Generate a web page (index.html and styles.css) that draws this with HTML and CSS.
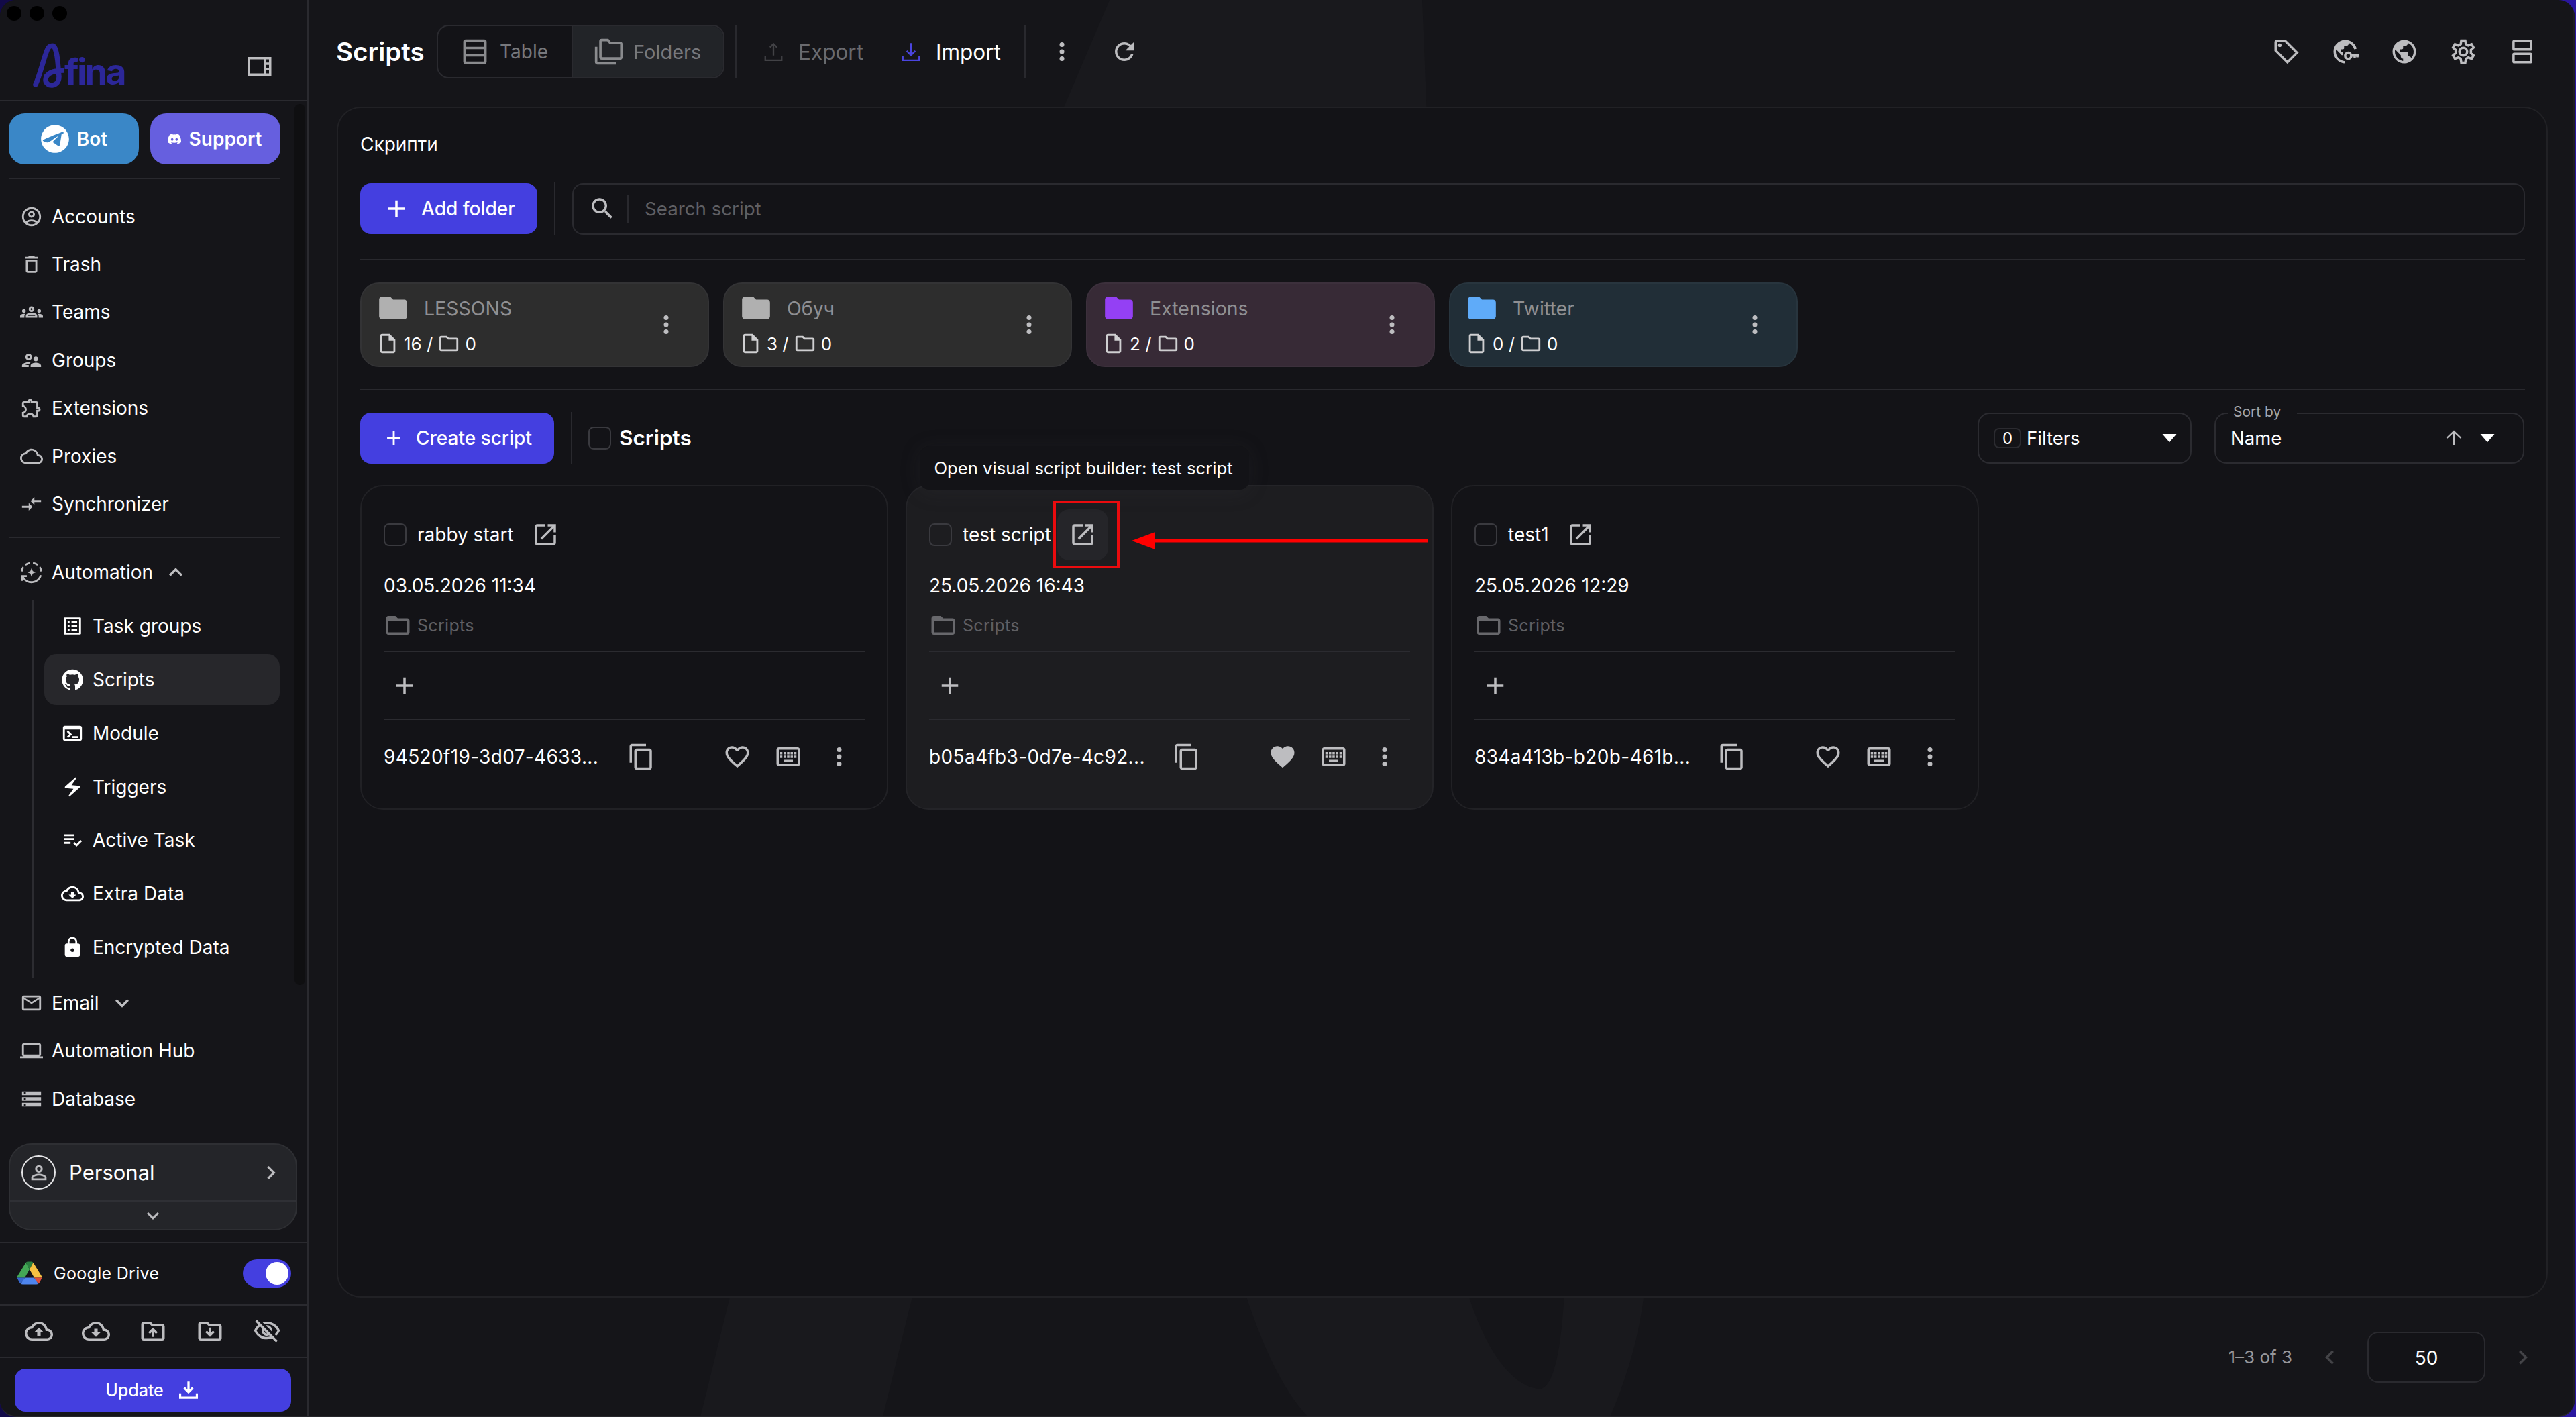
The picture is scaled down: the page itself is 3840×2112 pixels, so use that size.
FILE: index.html
```html
<!DOCTYPE html>
<html lang="en">
<head>
    <meta charset="UTF-8">
    <meta name="viewport" content="width=device-width, initial-scale=1.0">
    <title>Afina - Scripts</title>
    <link rel="stylesheet" href="styles.css">
</head>
<body>
    <!-- Icon sprite -->
    <svg class="sprite" xmlns="http://www.w3.org/2000/svg">
        <symbol id="i-panel" viewBox="0 0 24 24"><path d="M2 4v16h20V4H2zm18 4.67h-2.5V6H20v2.67zm-2.5 2H20v2.67h-2.5v-2.67zM4 6h11.5v12H4V6zm13.5 12v-2.67H20V18h-2.5z"/></symbol>
        <symbol id="i-telegram" viewBox="0 0 24 24"><path d="M12 2C6.48 2 2 6.48 2 12s4.48 10 10 10 10-4.48 10-10S17.52 2 12 2zm4.64 6.8c-.15 1.58-.8 5.42-1.13 7.19-.14.75-.42 1-.68 1.03-.58.05-1.02-.38-1.58-.75-.88-.58-1.38-.94-2.23-1.5-.99-.65-.35-1.01.22-1.59.15-.15 2.71-2.48 2.76-2.69.01-.03.01-.14-.07-.2-.08-.06-.19-.04-.27-.02-.12.02-1.96 1.25-5.54 3.69-.52.36-1 .53-1.42.52-.47-.01-1.37-.26-2.03-.48-.82-.27-1.47-.42-1.42-.88.03-.24.37-.49 1.02-.75 4-1.74 6.68-2.88 8.03-3.44 3.82-1.59 4.62-1.87 5.14-1.87.11 0 .37.03.54.17.14.12.18.28.2.45-.02.07-.02.13-.03.27z"/></symbol>
        <symbol id="i-discord" viewBox="0 0 24 24"><path d="M20.317 4.37a19.791 19.791 0 0 0-4.885-1.515.074.074 0 0 0-.079.037c-.21.375-.444.864-.608 1.25a18.27 18.27 0 0 0-5.487 0 12.64 12.64 0 0 0-.617-1.25.077.077 0 0 0-.079-.037A19.736 19.736 0 0 0 3.677 4.37a.07.07 0 0 0-.032.027C.533 9.046-.32 13.58.099 18.057a.082.082 0 0 0 .031.057 19.9 19.9 0 0 0 5.993 3.03.078.078 0 0 0 .084-.028 14.09 14.09 0 0 0 1.226-1.994.076.076 0 0 0-.041-.106 13.107 13.107 0 0 1-1.872-.892.077.077 0 0 1-.008-.128 10.2 10.2 0 0 0 .372-.292.074.074 0 0 1 .077-.01c3.928 1.793 8.18 1.793 12.062 0a.074.074 0 0 1 .078.01c.12.098.246.198.373.292a.077.077 0 0 1-.006.127 12.299 12.299 0 0 1-1.873.892.077.077 0 0 0-.041.107c.36.698.772 1.362 1.225 1.993a.076.076 0 0 0 .084.028 19.839 19.839 0 0 0 6.002-3.03.077.077 0 0 0 .032-.054c.5-5.177-.838-9.674-3.549-13.66a.061.061 0 0 0-.031-.03zM8.02 15.33c-1.183 0-2.157-1.085-2.157-2.419 0-1.333.956-2.419 2.157-2.419 1.21 0 2.176 1.096 2.157 2.42 0 1.333-.956 2.418-2.157 2.418zm7.975 0c-1.183 0-2.157-1.085-2.157-2.419 0-1.333.955-2.419 2.157-2.419 1.21 0 2.176 1.096 2.157 2.42 0 1.333-.946 2.418-2.157 2.418z"/></symbol>
        <symbol id="i-account" viewBox="0 0 24 24"><path d="M12 2C6.48 2 2 6.48 2 12s4.48 10 10 10 10-4.48 10-10S17.52 2 12 2zM7.35 18.5C8.66 17.56 10.26 17 12 17s3.34.56 4.65 1.5c-1.31.94-2.91 1.5-4.65 1.5s-3.34-.56-4.65-1.5zm10.79-1.38C16.45 15.8 14.32 15 12 15s-4.45.8-6.14 2.12C4.7 15.73 4 13.95 4 12c0-4.42 3.58-8 8-8s8 3.58 8 8c0 1.95-.7 3.73-1.86 5.12zM12 6c-1.93 0-3.5 1.57-3.5 3.5S10.07 13 12 13s3.5-1.57 3.5-3.5S13.93 6 12 6zm0 5c-.83 0-1.5-.67-1.5-1.5S11.17 8 12 8s1.5.67 1.5 1.5S12.83 11 12 11z"/></symbol>
        <symbol id="i-trash" viewBox="0 0 24 24"><path d="M6 19c0 1.1.9 2 2 2h8c1.1 0 2-.9 2-2V7H6v12zM8 9h8v10H8V9zm7.5-5l-1-1h-5l-1 1H5v2h14V4z"/></symbol>
        <symbol id="i-teams" viewBox="0 0 24 24"><path d="M4 13c1.1 0 2-.9 2-2s-.9-2-2-2-2 .9-2 2 .9 2 2 2zm1.13 1.1C4.76 14.04 4.39 14 4 14c-.99 0-1.93.21-2.78.58C.48 14.9 0 15.62 0 16.43V18h4.5v-1.61c0-.83.23-1.61.63-2.29zM20 13c1.1 0 2-.9 2-2s-.9-2-2-2-2 .9-2 2 .9 2 2 2zm4 3.43c0-.81-.48-1.53-1.22-1.85-.85-.37-1.79-.58-2.78-.58-.39 0-.76.04-1.13.1.4.68.63 1.46.63 2.29V18H24v-1.57zM16.24 13.65c-1.17-.52-2.61-.9-4.24-.9s-3.07.39-4.24.9C6.68 14.13 6 15.21 6 16.39V18h12v-1.61c0-1.18-.68-2.26-1.76-2.74zM8.07 16c.09-.23.13-.39.91-.69.97-.38 1.99-.56 3.02-.56s2.05.18 3.02.56c.77.3.81.46.91.69H8.07zM12 8c.55 0 1 .45 1 1s-.45 1-1 1-1-.45-1-1 .45-1 1-1m0-2c-1.66 0-3 1.34-3 3s1.34 3 3 3 3-1.34 3-3-1.34-3-3-3z"/></symbol>
        <symbol id="i-groups" viewBox="0 0 24 24"><path d="M9 12c1.93 0 3.5-1.57 3.5-3.5S10.93 5 9 5 5.5 6.57 5.5 8.5 7.07 12 9 12zm0-5c.83 0 1.5.67 1.5 1.5S9.83 10 9 10s-1.5-.67-1.5-1.5S8.17 7 9 7zm.05 10H4.77c.99-.5 2.7-1 4.23-1 .11 0 .23.01.34.01.34-.73.93-1.33 1.64-1.81-.73-.13-1.42-.2-1.98-.2-2.34 0-7 1.17-7 3.5V19h7v-1.5c0-.17.02-.34.05-.5zm7.45-2.5c-1.84 0-5.5 1.01-5.5 3V19h11v-1.5c0-1.99-3.66-3-5.5-3zm1.21-1.82c.76-.43 1.29-1.24 1.29-2.18C19 9.12 17.88 8 16.5 8S14 9.12 14 10.5c0 .94.53 1.75 1.29 2.18.36.2.77.32 1.21.32s.85-.12 1.21-.32z"/></symbol>
        <symbol id="i-extension" viewBox="0 0 24 24"><path d="M10.5 4.5c.28 0 .5.22.5.5v2h6v6h2c.28 0 .5.22.5.5s-.22.5-.5.5h-2v6h-2.12c-.68-1.75-2.39-3-4.38-3s-3.7 1.25-4.38 3H4v-2.12c1.75-.68 3-2.39 3-4.38 0-1.99-1.24-3.7-2.99-4.38L4 7h6V5c0-.28.22-.5.5-.5m0-2C9.12 2.5 8 3.62 8 5H4c-1.1 0-1.99.9-1.99 2v3.8h.29c1.49 0 2.7 1.21 2.7 2.7s-1.21 2.7-2.7 2.7H2V20c0 1.1.9 2 2 2h3.8v-.3c0-1.49 1.21-2.7 2.7-2.7s2.7 1.21 2.7 2.7v.3H17c1.1 0 2-.9 2-2v-4c1.38 0 2.5-1.12 2.5-2.5S20.38 11 19 11V7c0-1.1-.9-2-2-2h-4c0-1.38-1.12-2.5-2.5-2.5z"/></symbol>
        <symbol id="i-cloud" viewBox="0 0 24 24"><path d="M19.35 10.04C18.67 6.59 15.64 4 12 4 9.11 4 6.6 5.64 5.35 8.04 2.34 8.36 0 10.91 0 14c0 3.31 2.69 6 6 6h13c2.76 0 5-2.24 5-5 0-2.64-2.05-4.78-4.65-4.96zM19 18H6c-2.21 0-4-1.79-4-4 0-2.05 1.53-3.76 3.56-3.97l1.07-.11.5-.95C8.08 7.14 9.94 6 12 6c2.62 0 4.88 1.86 5.39 4.43l.3 1.5 1.53.11c1.56.1 2.78 1.41 2.78 2.96 0 1.65-1.35 3-3 3z"/></symbol>
        <symbol id="i-cloud-down" viewBox="0 0 24 24"><use href="#i-cloud"/><path d="M13.45 10h-2.9v3H8l4 4 4-4h-2.55z"/></symbol>
        <symbol id="i-cloud-up" viewBox="0 0 24 24"><use href="#i-cloud"/><path d="M8 13h2.55v3h2.9v-3H16l-4-4z"/></symbol>
        <symbol id="i-sync" viewBox="0 0 24 24"><path d="M9.01 14H2v2h7.01v3L13 15l-3.99-4v3zm5.98-1v-3H22V8h-7.01V5L11 9l3.99 4z"/></symbol>
        <symbol id="i-auto" viewBox="0 0 24 24"><path d="M12 7.5l1.3 3.2 3.2 1.3-3.2 1.3-1.3 3.2-1.3-3.2-3.2-1.3 3.2-1.3z"/><path class="line" d="M1.8 11a10 10 0 0 1 1.500-4.500M5.500 4.200A10 10 0 0 1 10.500 2M13.500 2a10 10 0 0 1 5 2.200M20.700 6.500a10 10 0 0 1 1.500 4.500M21.800 15A10.200 10.200 0 0 1 3 17M2 21v-5h5"/></symbol>
        <symbol id="i-up" viewBox="0 0 24 24"><path d="M12 8l-6 6 1.41 1.41L12 10.83l4.59 4.58L18 14z"/></symbol>
        <symbol id="i-down" viewBox="0 0 24 24"><path d="M16.59 8.59L12 13.17 7.41 8.59 6 10l6 6 6-6z"/></symbol>
        <symbol id="i-right" viewBox="0 0 24 24"><path d="M10 6L8.59 7.41 13.17 12l-4.58 4.59L10 18l6-6z"/></symbol>
        <symbol id="i-left" viewBox="0 0 24 24"><path d="M15.41 7.41L14 6l-6 6 6 6 1.41-1.41L10.83 12z"/></symbol>
        <symbol id="i-list" viewBox="0 0 24 24"><path d="M19 5v14H5V5h14m1.1-2H3.9c-.5 0-.9.4-.9.9v16.2c0 .4.4.9.9.9h16.2c.4 0 .9-.5.9-.9V3.9c0-.5-.5-.9-.9-.9zM11 7h6v2h-6V7zm0 4h6v2h-6v-2zm0 4h6v2h-6zM7 7h2v2H7zm0 4h2v2H7zm0 4h2v2H7z"/></symbol>
        <symbol id="i-github" viewBox="0 0 24 24"><path d="M12 1.27a11 11 0 00-3.48 21.46c.55.09.73-.28.73-.55v-1.84c-3.03.64-3.67-1.46-3.67-1.46-.55-1.29-1.28-1.65-1.28-1.65-.92-.65.1-.65.1-.65 1.1 0 1.73 1.1 1.73 1.1.92 1.65 2.57 1.2 3.21.92a2 2 0 01.64-1.47c-2.47-.27-5.04-1.19-5.04-5.5 0-1.1.46-2.1 1.2-2.84a3.76 3.76 0 010-2.93s.91-.28 3.11 1.1c1.8-.49 3.7-.49 5.5 0 2.1-1.38 3.02-1.1 3.02-1.1a3.76 3.76 0 01.1 2.93c.83.74 1.2 1.74 1.2 2.94 0 4.21-2.57 5.13-5.04 5.4.45.37.82.92.82 2.02v3.03c0 .27.1.64.73.55A11 11 0 0012 1.27"/></symbol>
        <symbol id="i-terminal" viewBox="0 0 24 24"><path d="M20 4H4c-1.11 0-2 .9-2 2v12c0 1.1.89 2 2 2h16c1.1 0 2-.9 2-2V6c0-1.1-.89-2-2-2zm0 14H4V8h16v10zm-2-1h-6v-2h6v2zM7.5 17l-1.41-1.41L8.67 13l-2.59-2.59L7.5 9l4 4-4 4z"/></symbol>
        <symbol id="i-bolt" viewBox="0 0 24 24"><path d="M14.69 2.21L4.33 11.49c-.64.58-.28 1.65.58 1.73L13 14l-4.85 6.76c-.22.31-.19.74.08 1.01.3.3.77.31 1.08.02l10.36-9.28c.64-.58.28-1.65-.58-1.73L11 10l4.85-6.76c.22-.31.19-.74-.08-1.01-.3-.3-.77-.31-1.08-.02z"/></symbol>
        <symbol id="i-tasks" viewBox="0 0 24 24"><path d="M3 10h11v2H3zm0-4h11v2H3zm0 8h7v2H3zm17.59-2.07l-4.25 4.24-2.12-2.12-1.41 1.41L16.34 19 22 13.34z"/></symbol>
        <symbol id="i-lock" viewBox="0 0 24 24"><path d="M18 8h-1V6c0-2.76-2.24-5-5-5S7 3.24 7 6v2H6c-1.1 0-2 .9-2 2v10c0 1.1.9 2 2 2h12c1.1 0 2-.9 2-2V10c0-1.1-.9-2-2-2zm-6 9c-1.1 0-2-.9-2-2s.9-2 2-2 2 .9 2 2-.9 2-2 2zm3.1-9H8.9V6c0-1.71 1.39-3.1 3.1-3.1 1.71 0 3.1 1.39 3.1 3.1v2z"/></symbol>
        <symbol id="i-mail" viewBox="0 0 24 24"><path d="M22 6c0-1.1-.9-2-2-2H4c-1.1 0-2 .9-2 2v12c0 1.1.9 2 2 2h16c1.1 0 2-.9 2-2V6zm-2 0l-8 5-8-5h16zm0 12H4V8l8 5 8-5v10z"/></symbol>
        <symbol id="i-laptop" viewBox="0 0 24 24"><path d="M20 18c1.1 0 1.99-.9 1.99-2L22 6c0-1.1-.9-2-2-2H4c-1.1 0-2 .9-2 2v10c0 1.1.9 2 2 2H0v2h24v-2h-4zM4 6h16v10H4V6z"/></symbol>
        <symbol id="i-storage" viewBox="0 0 24 24"><path d="M2 20h20v-4H2v4zm2-3h2v2H4v-2zM2 4v4h20V4H2zm4 3H4V5h2v2zm-4 7h20v-4H2v4zm2-3h2v2H4v-2z"/></symbol>
        <symbol id="i-person" viewBox="0 0 24 24"><path d="M12 6c1.1 0 2 .9 2 2s-.9 2-2 2-2-.9-2-2 .9-2 2-2m0 9c2.7 0 5.8 1.29 6 2v1H6v-.99c.2-.72 3.3-2.01 6-2.01m0-11C9.79 4 8 5.79 8 8s1.79 4 4 4 4-1.79 4-4-1.79-4-4-4zm0 9c-2.67 0-8 1.34-8 4v3h16v-3c0-2.66-5.33-4-8-4z"/></symbol>
        <symbol id="i-drive" viewBox="0 0 38 34"><path fill="#43a755" d="M13.500 1.500L.8 22Q0 23 .3 24H12l7-12.500z"/><path fill="#2b8040" d="M13.500 1.500Q14.500 0 16 0h6q1.500 0 2.500 1.500L19 11.500z"/><path fill="#f6c142" d="M24.500 1.500L37.200 22q.8 1 .5 2H26L19 11.500z"/><path fill="#4e85ee" d="M12 24h14l6 9q-1 1-3 1H9q-2 0-3-1z"/><path fill="#3566cc" d="M.3 24H12L6 33q-1-.5-2-2z"/><path fill="#dd4d3b" d="M26 24h11.700L34 31q-1 1.500-2 2z"/></symbol>
        <symbol id="i-folder-up" viewBox="0 0 24 24"><path d="M20 6h-8l-2-2H4c-1.1 0-1.99.9-1.99 2L2 18c0 1.1.9 2 2 2h16c1.1 0 2-.9 2-2V8c0-1.1-.9-2-2-2zm0 12H4V6h5.17l1.41 1.41.59.59H20v10zM9.41 14.42L11 12.84V17h2v-4.16l1.59 1.59L16 13.01 12.01 9 8 13.01l1.41 1.41z"/></symbol>
        <symbol id="i-folder-down" viewBox="0 0 24 24"><path d="M20 6h-8l-2-2H4c-1.1 0-1.99.9-1.99 2L2 18c0 1.1.9 2 2 2h16c1.1 0 2-.9 2-2V8c0-1.1-.9-2-2-2zm0 12H4V6h5.17l1.41 1.41.59.59H20v10zM9.41 11.58L11 13.16V9h2v4.16l1.59-1.59L16 12.99 12.01 17 8 12.99z"/></symbol>
        <symbol id="i-eye-off" viewBox="0 0 24 24"><path d="M12 6c3.79 0 7.17 2.13 8.82 5.5-.59 1.22-1.42 2.27-2.41 3.12l1.41 1.41c1.39-1.23 2.49-2.77 3.18-4.53C21.27 7.11 17 4 12 4c-1.27 0-2.49.2-3.64.57l1.65 1.65C10.66 6.09 11.32 6 12 6zm-1.07 1.14L13 9.21c.57.25 1.03.71 1.28 1.28l2.07 2.07c.08-.34.14-.7.14-1.07C16.5 9.01 14.48 7 12 7c-.37 0-.72.05-1.07.14zM2.01 3.87l2.68 2.68C3.06 7.83 1.77 9.53 1 11.5 2.73 15.89 7 19 12 19c1.52 0 2.98-.29 4.32-.82l3.42 3.42 1.41-1.41L3.42 2.45 2.01 3.87zm7.5 7.5l2.61 2.61c-.04.01-.08.02-.12.02-1.38 0-2.5-1.12-2.5-2.5 0-.05.01-.08.01-.13zm-3.4-3.4l1.75 1.75c-.23.55-.36 1.15-.36 1.78 0 2.48 2.02 4.5 4.5 4.5.63 0 1.23-.13 1.77-.36l.98.98c-.88.24-1.8.38-2.75.38-3.79 0-7.17-2.13-8.82-5.5.7-1.43 1.72-2.61 2.93-3.53z"/></symbol>
        <symbol id="i-download" viewBox="0 0 24 24"><path class="line thick" d="M12 1V14.500M6.500 9L12 14.500 17.500 9M1.300 16v5.500h21.400V16"/></symbol>
        <symbol id="i-export" viewBox="0 0 24 24"><path class="line" d="M12 17V2M7.500 6.500L12 2l4.500 4.500M1.500 18v5h21v-5"/></symbol>
        <symbol id="i-import" viewBox="0 0 24 24"><path class="line" d="M12 1v14.500M6.500 11l5.500 5.500 5.500-5.500M1.500 18v5h21v-5"/></symbol>
        <symbol id="i-table" viewBox="0 0 24 24"><path class="line" d="M4.500 3h15q1 0 1 1v16q0 1-1 1h-15q-1 0-1-1V4q0-1 1-1zM3.500 9h17M3.500 15h17"/></symbol>
        <symbol id="i-folders" viewBox="0 0 24 24"><path d="M3 8H1v12.500c0 1.100.9 2 2 2h15v-2H3V8z"/><path class="line" d="M6.500 2.500h5l2 2.500h8q1 0 1 1v10.500q0 1-1 1h-15q-1 0-1-1v-13q0-1 1-1z"/></symbol>
        <symbol id="i-dots" viewBox="0 0 24 24"><circle cx="12" cy="6" r="2"/><circle cx="12" cy="12" r="2"/><circle cx="12" cy="18" r="2"/></symbol>
        <symbol id="i-refresh" viewBox="0 0 24 24"><path d="M17.65 6.35C16.2 4.9 14.21 4 12 4c-4.42 0-7.99 3.58-7.99 8s3.57 8 7.99 8c3.73 0 6.84-2.55 7.73-6h-2.08c-.82 2.33-3.04 4-5.65 4-3.31 0-6-2.69-6-6s2.69-6 6-6c1.66 0 3.14.69 4.22 1.78L13 11h7V4l-2.35 2.35z"/></symbol>
        <symbol id="i-search" viewBox="0 0 24 24"><path d="M15.5 14h-.79l-.28-.27C15.41 12.59 16 11.11 16 9.5 16 5.91 13.09 3 9.5 3S3 5.91 3 9.5 5.91 16 9.5 16c1.61 0 3.09-.59 4.23-1.57l.27.28v.79l5 4.99L20.49 19l-4.99-5zm-6 0C7.01 14 5 11.99 5 9.5S7.01 5 9.5 5 14 7.01 14 9.5 11.99 14 9.5 14z"/></symbol>
        <symbol id="i-plus" viewBox="0 0 24 24"><path d="M19 13h-6v6h-2v-6H5v-2h6V5h2v6h6v2z"/></symbol>
        <symbol id="i-folder" viewBox="0 0 24 24"><path d="M10 4H4c-1.1 0-1.99.9-1.99 2L2 18c0 1.1.9 2 2 2h16c1.1 0 2-.9 2-2V8c0-1.1-.9-2-2-2h-8l-2-2z"/></symbol>
        <symbol id="i-folder-line" viewBox="0 0 24 24"><path d="M9.17 6l2 2H20v10H4V6h5.17M10 4H4c-1.1 0-1.99.9-1.99 2L2 18c0 1.1.9 2 2 2h16c1.1 0 2-.9 2-2V8c0-1.1-.9-2-2-2h-8l-2-2z"/></symbol>
        <symbol id="i-folder-tab" viewBox="0 0 24 24"><path d="M20 6h-8l-2-2H4c-1.1 0-1.99.9-1.99 2L2 18c0 1.1.9 2 2 2h16c1.1 0 2-.9 2-2V8c0-1.1-.9-2-2-2zm0 12H4V8h16v10z"/></symbol>
        <symbol id="i-doc" viewBox="0 0 24 24"><path d="M14 2H6c-1.1 0-1.99.9-1.99 2L4 20c0 1.1.89 2 1.99 2H18c1.1 0 2-.9 2-2V8l-6-6zM6 20V4h7v5h5v11H6z"/></symbol>
        <symbol id="i-open" viewBox="0 0 24 24"><path d="M19 19H5V5h7V3H5c-1.11 0-2 .9-2 2v14c0 1.1.89 2 2 2h14c1.1 0 2-.9 2-2v-7h-2v7zM14 3v2h3.59l-9.83 9.83 1.41 1.41L19 6.41V10h2V3h-7z"/></symbol>
        <symbol id="i-copy" viewBox="0 0 24 24"><path d="M16 1H4c-1.1 0-2 .9-2 2v14h2V3h12V1zm3 4H8c-1.1 0-2 .9-2 2v14c0 1.1.9 2 2 2h11c1.1 0 2-.9 2-2V7c0-1.1-.9-2-2-2zm0 16H8V7h11v14z"/></symbol>
        <symbol id="i-heart" viewBox="0 0 24 24"><path d="M16.5 3c-1.74 0-3.41.81-4.5 2.09C10.91 3.81 9.24 3 7.5 3 4.42 3 2 5.42 2 8.5c0 3.78 3.4 6.86 8.55 11.54L12 21.35l1.45-1.32C18.6 15.36 22 12.28 22 8.5 22 5.42 19.58 3 16.5 3zm-4.4 15.55l-.1.1-.1-.1C7.14 14.24 4 11.39 4 8.5 4 6.5 5.5 5 7.5 5c1.54 0 3.04.99 3.57 2.36h1.87C13.46 5.99 14.96 5 16.5 5c2 0 3.5 1.5 3.5 3.5 0 2.89-3.14 5.74-7.9 10.05z"/></symbol>
        <symbol id="i-heart-fill" viewBox="0 0 24 24"><path d="M12 21.35l-1.45-1.32C5.4 15.36 2 12.28 2 8.5 2 5.42 4.42 3 7.5 3c1.74 0 3.41.81 4.5 2.09C13.09 3.81 14.76 3 16.5 3 19.58 3 22 5.42 22 8.5c0 3.78-3.4 6.86-8.55 11.54L12 21.35z"/></symbol>
        <symbol id="i-keyboard" viewBox="0 0 24 24"><path d="M20 6v12H4V6h16m0-2H4c-1.1 0-1.99.9-1.99 2L2 18c0 1.1.9 2 2 2h16c1.1 0 2-.9 2-2V6c0-1.1-.9-2-2-2zm-9 4h2v2h-2zm0 3h2v2h-2zM8 8h2v2H8zm0 3h2v2H8zm-3 0h2v2H5zm0-3h2v2H5zm3 6.500h8v2H8zm6-3.500h2v2h-2zm0-3h2v2h-2zm3 3h2v2h-2zm0-3h2v2h-2z"/></symbol>
        <symbol id="i-label" viewBox="0 0 24 24"><path class="line" d="M4 3h7.300L21.200 12.800 13 21 3 11V4q0-1 1-1z"/><circle cx="6.500" cy="6.500" r="1.500"/></symbol>
        <symbol id="i-globe" viewBox="0 0 24 24"><path d="M12 2C6.48 2 2 6.48 2 12s4.48 10 10 10 10-4.48 10-10S17.52 2 12 2zm-1 17.93c-3.95-.49-7-3.85-7-7.93 0-.62.08-1.21.21-1.79L9 15v1c0 1.1.9 2 2 2v1.93zm6.9-2.54c-.26-.81-1-1.39-1.9-1.39h-1v-3c0-.55-.45-1-1-1H8v-2h2c.55 0 1-.45 1-1V7h2c1.1 0 2-.9 2-2v-.41c2.93 1.19 5 4.06 5 7.41 0 2.08-.8 3.97-2.1 5.39z"/></symbol>
        <symbol id="i-globe-key" viewBox="0 0 24 24"><path d="M12 22C6.480 22 2 17.520 2 12S6.480 2 12 2c4.200 0 7.800 2.600 9.300 6.200l.3 1.300-2 .5C18.900 7.600 17.200 5.500 15 4.590V5c0 1.100-.9 2-2 2h-2v2c0 .55-.45 1-1 1H8v2h2v3H9l-4.790-4.790C4.080 10.800 4 11.380 4 12c0 4.080 3.050 7.440 7 7.930l1 .07z"/><circle class="line" cx="14.500" cy="15.500" r="2.600"/><path class="line" d="M17 15.300h6.600M20 15v2.400M22.300 15v1.800"/></symbol>
        <symbol id="i-gear" viewBox="0 0 24 24"><path class="line" d="M10.300 2.600h3.400l.5 3 2 1.100 2.900-1.100 1.700 2.900-2.300 2v2.700l2.300 2-1.700 2.900-2.900-1.100-2 1.100-.5 3.300h-3.400l-.5-3.300-2-1.100-2.900 1.100-1.700-2.900 2.300-2v-2.700l-2.300-2 1.700-2.900 2.900 1.100 2-1.100z"/><circle class="line" cx="12" cy="12" r="3.300"/></symbol>
        <symbol id="i-rows" viewBox="0 0 24 24"><rect class="line" x="4.500" y="3" width="15" height="7.200" rx=".6"/><rect class="line" x="4.500" y="13.800" width="15" height="7.200" rx=".6"/></symbol>
        <symbol id="i-caret" viewBox="0 0 24 24"><path d="M6 8.500l6 7 6-7z"/></symbol>
        <symbol id="i-arrow-up" viewBox="0 0 24 24"><path class="line arrow" d="M12 21.500V3.500M3 12l9-8.500 9 8.500"/></symbol>
    </svg>

    <div class="window">
        <!-- Sidebar -->
        <aside class="sidebar">
            <div class="sidebar-top">
                <div class="traffic"><i></i><i></i><i></i></div>
                <div class="logo">
                    <svg class="logo-mark" viewBox="0 0 48 68"><path d="M5 62C13 44 17 22 23 9c3-6 9-6 11-1 5 12 4 26 6 42 0 17-20 16-20 5 0-10 12-14 27-14"/></svg>
                    <span>fina</span>
                </div>
                <svg class="icon s42"><use href="#i-panel"/></svg>
            </div>

            <div class="sidebar-body">
                <div class="promo">
                    <button class="btn-bot"><svg class="icon s50"><use href="#i-telegram"/></svg>Bot</button>
                    <button class="btn-support"><svg class="icon s20"><use href="#i-discord"/></svg>Support</button>
                </div>
                <hr class="side-line">
                <nav class="nav">
                    <a class="nav-item"><svg class="icon s34"><use href="#i-account"/></svg>Accounts</a>
                    <a class="nav-item"><svg class="icon s34"><use href="#i-trash"/></svg>Trash</a>
                    <a class="nav-item"><svg class="icon s34"><use href="#i-teams"/></svg>Teams</a>
                    <a class="nav-item"><svg class="icon s34"><use href="#i-groups"/></svg>Groups</a>
                    <a class="nav-item"><svg class="icon s34"><use href="#i-extension"/></svg>Extensions</a>
                    <a class="nav-item"><svg class="icon s34"><use href="#i-cloud"/></svg>Proxies</a>
                    <a class="nav-item"><svg class="icon s34"><use href="#i-sync"/></svg>Synchronizer</a>
                </nav>
                <hr class="side-line second">
                <nav class="nav automation">
                    <a class="nav-item"><svg class="icon s34"><use href="#i-auto"/></svg>Automation<svg class="icon s40"><use href="#i-up"/></svg></a>
                    <div class="subnav">
                        <a class="sub-item"><svg class="icon s34"><use href="#i-list"/></svg>Task groups</a>
                        <a class="sub-item active"><svg class="icon s34"><use href="#i-github"/></svg>Scripts</a>
                        <a class="sub-item"><svg class="icon s34"><use href="#i-terminal"/></svg>Module</a>
                        <a class="sub-item"><svg class="icon s34"><use href="#i-bolt"/></svg>Triggers</a>
                        <a class="sub-item"><svg class="icon s34"><use href="#i-tasks"/></svg>Active Task</a>
                        <a class="sub-item"><svg class="icon s34"><use href="#i-cloud-down"/></svg>Extra Data</a>
                        <a class="sub-item"><svg class="icon s34"><use href="#i-lock"/></svg>Encrypted Data</a>
                    </div>
                    <a class="nav-item"><svg class="icon s34"><use href="#i-mail"/></svg>Email<svg class="icon s40"><use href="#i-down"/></svg></a>
                    <a class="nav-item"><svg class="icon s34"><use href="#i-laptop"/></svg>Automation Hub</a>
                    <a class="nav-item"><svg class="icon s34"><use href="#i-storage"/></svg>Database</a>
                </nav>
                <div class="scroll-thumb"></div>
            </div>

            <div class="workspace">
                <div class="workspace-main">
                    <span class="avatar"><svg class="icon s34"><use href="#i-person"/></svg></span>
                    <span class="workspace-name">Personal</span>
                    <svg class="icon s40"><use href="#i-right"/></svg>
                </div>
                <div class="workspace-more"><svg class="icon s36"><use href="#i-down"/></svg></div>
            </div>

            <div class="drive">
                <svg class="drive-logo"><use href="#i-drive"/></svg>
                <span>Google Drive</span>
                <div class="toggle"></div>
            </div>

            <div class="sync-icons">
                <svg class="icon s42"><use href="#i-cloud-up"/></svg>
                <svg class="icon s42"><use href="#i-cloud-down"/></svg>
                <svg class="icon s42"><use href="#i-folder-up"/></svg>
                <svg class="icon s42"><use href="#i-folder-down"/></svg>
                <svg class="icon s42"><use href="#i-eye-off"/></svg>
            </div>

            <button class="btn-update">Update<svg class="icon s28"><use href="#i-download"/></svg></button>
        </aside>

        <!-- Main area -->
        <main class="main">
            <svg class="watermark" viewBox="460 0 3380 2112">
                <path d="M1654 0L1587 157Q1250 1050 1088 1933L1044 2112H1316L1360 1933Q1480 1150 1800 500Q1870 1300 1858 1933Q1900 2060 1950 2112H2400Q2470 1950 2450 1800L2335 1800Q2335 2060 2297 2070C2240 2070 2180 1960 2163 1800Q2150 700 2120 0z"/>
            </svg>

            <header class="topbar">
                <h1>Scripts</h1>
                <div class="view-toggle">
                    <button class="view-table"><svg class="icon s44"><use href="#i-table"/></svg>Table</button>
                    <button class="view-folders"><svg class="icon s44"><use href="#i-folders"/></svg>Folders</button>
                </div>
                <i class="v-line"></i>
                <button class="btn-export"><svg class="icon s28"><use href="#i-export"/></svg>Export</button>
                <button class="btn-import"><svg class="icon s28"><use href="#i-import"/></svg>Import</button>
                <i class="v-line"></i>
                <svg class="icon s42 top-dots"><use href="#i-dots"/></svg>
                <svg class="icon s42"><use href="#i-refresh"/></svg>
                <div class="top-icons">
                    <svg class="icon s42"><use href="#i-label"/></svg>
                    <svg class="icon s42"><use href="#i-globe-key"/></svg>
                    <svg class="icon s42"><use href="#i-globe"/></svg>
                    <svg class="icon s42"><use href="#i-gear"/></svg>
                    <svg class="icon s42"><use href="#i-rows"/></svg>
                </div>
            </header>

            <section class="panel">
                <div class="breadcrumb">Скрипти</div>

                <div class="search-row">
                    <button class="btn-primary add-folder"><svg class="icon s42"><use href="#i-plus"/></svg>Add folder</button>
                    <i class="v-line"></i>
                    <div class="search">
                        <svg class="icon s42"><use href="#i-search"/></svg>
                        <i></i>
                        <span>Search script</span>
                    </div>
                </div>

                <div class="folders">
                    <div class="folder gray">
                        <div>
                            <div class="folder-name"><svg class="icon s50"><use href="#i-folder"/></svg>LESSONS</div>
                            <div class="folder-count"><svg class="icon s34"><use href="#i-doc"/></svg><span>16 /</span><svg class="icon s34"><use href="#i-folder-line"/></svg><span>0</span></div>
                        </div>
                        <svg class="icon s42"><use href="#i-dots"/></svg>
                    </div>
                    <div class="folder gray">
                        <div>
                            <div class="folder-name"><svg class="icon s50"><use href="#i-folder"/></svg>Обуч</div>
                            <div class="folder-count"><svg class="icon s34"><use href="#i-doc"/></svg><span>3 /</span><svg class="icon s34"><use href="#i-folder-line"/></svg><span>0</span></div>
                        </div>
                        <svg class="icon s42"><use href="#i-dots"/></svg>
                    </div>
                    <div class="folder purple">
                        <div>
                            <div class="folder-name"><svg class="icon s50"><use href="#i-folder"/></svg>Extensions</div>
                            <div class="folder-count"><svg class="icon s34"><use href="#i-doc"/></svg><span>2 /</span><svg class="icon s34"><use href="#i-folder-line"/></svg><span>0</span></div>
                        </div>
                        <svg class="icon s42"><use href="#i-dots"/></svg>
                    </div>
                    <div class="folder blue">
                        <div>
                            <div class="folder-name"><svg class="icon s50"><use href="#i-folder"/></svg>Twitter</div>
                            <div class="folder-count"><svg class="icon s34"><use href="#i-doc"/></svg><span>0 /</span><svg class="icon s34"><use href="#i-folder-line"/></svg><span>0</span></div>
                        </div>
                        <svg class="icon s42"><use href="#i-dots"/></svg>
                    </div>
                </div>

                <div class="list-head">
                    <button class="btn-primary create-script"><svg class="icon s34"><use href="#i-plus"/></svg>Create script</button>
                    <i class="v-line"></i>
                    <span class="checkbox"></span>
                    <h2>Scripts</h2>
                    <div class="select filters">
                        <span class="badge">0</span>Filters
                        <svg class="icon s42"><use href="#i-caret"/></svg>
                    </div>
                    <div class="select sort">
                        <span class="legend">Sort by</span>
                        Name
                        <svg class="icon s28"><use href="#i-arrow-up"/></svg>
                        <svg class="icon s42"><use href="#i-caret"/></svg>
                    </div>
                </div>

                <div class="cards">
                    <article class="card">
                        <div class="card-title"><span class="checkbox"></span><b>rabby start</b><span class="icon-btn"><svg class="icon s42"><use href="#i-open"/></svg></span></div>
                        <div class="card-date">03.05.2026 11:34</div>
                        <div class="card-folder"><svg class="icon s42"><use href="#i-folder-tab"/></svg>Scripts</div>
                        <div class="card-tags"><svg class="icon s42"><use href="#i-plus"/></svg></div>
                        <div class="card-foot">
                            <span class="card-id">94520f19-3d07-4633...</span>
                            <span class="icon-btn"><svg class="icon s42"><use href="#i-copy"/></svg></span>
                            <span class="card-actions">
                                <span class="icon-btn"><svg class="icon s42"><use href="#i-heart"/></svg></span>
                                <span class="icon-btn"><svg class="icon s42"><use href="#i-keyboard"/></svg></span>
                                <span class="icon-btn"><svg class="icon s42"><use href="#i-dots"/></svg></span>
                            </span>
                        </div>
                    </article>

                    <article class="card hovered">
                        <div class="card-title"><span class="checkbox"></span><b>test script</b><span class="icon-btn active"><svg class="icon s42"><use href="#i-open"/></svg></span></div>
                        <div class="card-date">25.05.2026 16:43</div>
                        <div class="card-folder"><svg class="icon s42"><use href="#i-folder-tab"/></svg>Scripts</div>
                        <div class="card-tags"><svg class="icon s42"><use href="#i-plus"/></svg></div>
                        <div class="card-foot">
                            <span class="card-id">b05a4fb3-0d7e-4c92...</span>
                            <span class="icon-btn"><svg class="icon s42"><use href="#i-copy"/></svg></span>
                            <span class="card-actions">
                                <span class="icon-btn"><svg class="icon s42"><use href="#i-heart-fill"/></svg></span>
                                <span class="icon-btn"><svg class="icon s42"><use href="#i-keyboard"/></svg></span>
                                <span class="icon-btn"><svg class="icon s42"><use href="#i-dots"/></svg></span>
                            </span>
                        </div>
                        <div class="tooltip">Open visual script builder: test script</div>
                        <div class="mark-box"></div>
                        <svg class="mark-arrow" viewBox="0 0 442 26"><path d="M0 13L35 0v10.500h407v5H35V26z"/></svg>
                    </article>

                    <article class="card">
                        <div class="card-title"><span class="checkbox"></span><b>test1</b><span class="icon-btn"><svg class="icon s42"><use href="#i-open"/></svg></span></div>
                        <div class="card-date">25.05.2026 12:29</div>
                        <div class="card-folder"><svg class="icon s42"><use href="#i-folder-tab"/></svg>Scripts</div>
                        <div class="card-tags"><svg class="icon s42"><use href="#i-plus"/></svg></div>
                        <div class="card-foot">
                            <span class="card-id">834a413b-b20b-461b...</span>
                            <span class="icon-btn"><svg class="icon s42"><use href="#i-copy"/></svg></span>
                            <span class="card-actions">
                                <span class="icon-btn"><svg class="icon s42"><use href="#i-heart"/></svg></span>
                                <span class="icon-btn"><svg class="icon s42"><use href="#i-keyboard"/></svg></span>
                                <span class="icon-btn"><svg class="icon s42"><use href="#i-dots"/></svg></span>
                            </span>
                        </div>
                    </article>
                </div>
            </section>

            <footer class="pager">
                <span>1–3 of 3</span>
                <svg class="icon s42"><use href="#i-left"/></svg>
                <div class="page-size">50</div>
                <svg class="icon s42"><use href="#i-right"/></svg>
            </footer>
        </main>
    </div>
</body>
</html>
```
FILE: styles.css
```css
* {
    box-sizing: border-box;
}

body {
    margin: 0;
    width: 3840px;
    height: 2112px;
    overflow: hidden;
    background: linear-gradient(90deg, #120a48 0%, #2a17a0 100%);
    font-family: Inter, "Liberation Sans", sans-serif;
    font-size: 28px;
    color: #fff;
}

button {
    display: flex;
    align-items: center;
    border: 0;
    padding: 0;
    background: none;
    color: inherit;
    font: inherit;
}

h1, h2 {
    margin: 0;
    font-weight: 600;
}

.sprite {
    position: absolute;
    width: 0;
    height: 0;
}

.icon {
    flex: none;
    fill: currentColor;
    color: #bdbdc0;
    overflow: visible;
}

.line { fill: none; stroke: currentColor; stroke-width: 2; }
.thick { stroke-width: 2.8; }
.arrow { stroke-width: 2; }

.s20 { width: 20px; height: 20px; }
.s28 { width: 28px; height: 28px; }
.s34 { width: 34px; height: 34px; }
.s36 { width: 36px; height: 36px; }
.s40 { width: 40px; height: 40px; }
.s42 { width: 42px; height: 42px; }
.s44 { width: 44px; height: 44px; }
.s50 { width: 50px; height: 50px; }

.window {
    display: flex;
    width: 3838px;
    height: 2112px;
    border-bottom: 2px solid #26262b;
    border-radius: 24px;
    overflow: hidden;
    background: #151519;
}

/* Sidebar */
.sidebar {
    display: flex;
    flex-direction: column;
    width: 460px;
    border-right: 2px solid #2a2a2f;
    background: #151519;
}

.sidebar-top {
    position: relative;
    display: flex;
    justify-content: space-between;
    height: 151px;
    padding: 64px 50px 0 48px;
    border-bottom: 2px solid #2a2a2f;
}

.sidebar-top > .icon {
    margin-top: 14px;
}

.traffic {
    position: absolute;
    left: 10px;
    top: 9px;
    display: flex;
    gap: 12px;
}

.traffic i {
    width: 22px;
    height: 22px;
    border-radius: 50%;
    background: #000;
}

.logo {
    display: flex;
    color: #2c2799;
    font-size: 54px;
    line-height: 86px;
    font-weight: 700;
    letter-spacing: -3px;
}

.logo-mark {
    width: 48px;
    height: 68px;
    fill: none;
    stroke: #2c2799;
    stroke-width: 7.5;
    stroke-linecap: round;
}

.sidebar-body {
    position: relative;
    height: 1553px;
    padding: 18px 13px 0;
}

.scroll-thumb {
    position: absolute;
    right: 3px;
    top: 4px;
    width: 16px;
    height: 1313px;
    border-radius: 8px;
    background: #0f0f11;
}

.promo {
    display: flex;
    gap: 17px;
}

.promo button {
    width: 194px;
    height: 76px;
    justify-content: center;
    border-radius: 24px;
    font-weight: 600;
}

.promo .icon { color: #fff; }
.btn-bot { gap: 8px; padding-right: 3px; background: #3a87c7; }
.btn-support { gap: 12px; padding-right: 2px; background: #665fdf; }

.side-line {
    width: 404px;
    height: 2px;
    margin: 20px 0 0;
    border: 0;
    background: #29292e;
}

.side-line.second {
    margin-top: 13px;
}

.nav {
    padding-top: 20px;
}

.nav-item {
    display: flex;
    align-items: center;
    height: 71.4px;
    padding-left: 17px;
    gap: 13px;
}

.nav-item .s40 {
    margin-left: 1px;
}

.automation {
    padding-top: 16px;
}

.subnav {
    display: flex;
    flex-direction: column;
    gap: 3.8px;
    height: 562px;
    margin: 6px 0 2px 35px;
    padding-left: 16px;
    border-left: 2px solid #2c2c31;
}

.sub-item {
    display: flex;
    align-items: center;
    gap: 13px;
    width: 351px;
    height: 76px;
    padding-left: 25px;
    border-radius: 18px;
}

.sub-item .icon { color: #fff; }
.sub-item.active { background: #27272b; }

.workspace {
    flex: none;
    width: 430px;
    height: 130px;
    margin-left: 13px;
    border: 2px solid #2e2f33;
    border-radius: 34px;
    background: #242529;
}

.workspace-main {
    display: flex;
    align-items: center;
    height: 85px;
    padding: 0 17px 0 17px;
    border-bottom: 2px solid #2f3035;
    font-size: 31px;
}

.avatar {
    display: flex;
    align-items: center;
    justify-content: center;
    width: 51px;
    height: 51px;
    margin-right: 20px;
    border: 2px solid #e4e4e6;
    border-radius: 50%;
}

.workspace-name {
    flex: 1;
}

.workspace-more {
    display: flex;
    justify-content: center;
    padding-top: 3px;
}

.drive {
    display: flex;
    align-items: center;
    height: 95px;
    margin-top: 17px;
    padding: 0 24px 2px 25px;
    border-top: 2px solid #2a2a2f;
    border-bottom: 2px solid #2a2a2f;
    font-size: 25px;
    letter-spacing: 0.3px;
}

.drive-logo {
    width: 38px;
    height: 35px;
    margin-right: 17px;
}

.toggle {
    width: 72px;
    height: 42px;
    margin-left: auto;
    padding: 4px;
    border-radius: 21px;
    background: #443fe0;
}

.toggle::after {
    content: "";
    display: block;
    width: 34px;
    height: 34px;
    margin-left: 30px;
    border-radius: 50%;
    background: #fff;
}

.sync-icons {
    display: flex;
    align-items: center;
    justify-content: space-between;
    height: 78px;
    padding: 0 39px 0 37px;
    border-bottom: 2px solid #2a2a2f;
}

.btn-update {
    justify-content: center;
    gap: 23px;
    width: 412px;
    height: 64px;
    margin: 16px 0 0 22px;
    padding-right: 4px;
    border-radius: 16px;
    background: #443fe0;
    font-size: 25px;
    font-weight: 500;
}

.btn-update .icon { color: #fff; }

/* Main */
.main {
    position: relative;
    flex: 1;
    padding-left: 42px;
    border-right: 2px solid #1c1c21;
}

.watermark {
    position: absolute;
    left: 0;
    top: 0;
    width: 3380px;
    height: 2112px;
    fill: #19191d;
}

.topbar {
    position: relative;
    display: flex;
    align-items: center;
    height: 159px;
    padding-bottom: 5px;
}

.topbar h1 {
    width: 150px;
    margin-left: -1px;
    font-size: 38.500px;
}

.v-line {
    flex: none;
    width: 2px;
    height: 78px;
    background: #29292e;
}

.view-toggle {
    display: flex;
    width: 429px;
    height: 80px;
    margin-right: 16px;
    border: 2px solid #2a2a2f;
    border-radius: 18px;
    overflow: hidden;
    background: #131317;
    font-size: 29px;
    color: #77787c;
}

.view-toggle button {
    height: 100%;
    gap: 15px;
}

.view-toggle .icon { color: #8a8b8e; }
.view-table { width: 199px; padding-left: 33px; font-size: 28px; }
.view-folders { flex: 1; padding-left: 31px; border-left: 2px solid #2a2a2f; background: #222428; }

.btn-export, .btn-import {
    gap: 23px;
    font-size: 31.500px;
}

.btn-export { width: 205px; margin-left: 41px; color: #6a6a6e; }
.btn-export .icon { color: #424246; }
.btn-import { width: 183px; }
.btn-import .icon { color: #4b45e0; }
.top-dots { margin: 0 51px 0 33px; }

.top-icons {
    display: flex;
    gap: 46px;
    margin-left: auto;
    margin-right: 55px;
}

.panel {
    position: relative;
    width: 3296px;
    height: 1775px;
    padding: 35px 33px;
    border: 2px solid #212125;
    border-radius: 36px;
    background: #131317;
}

.breadcrumb {
    line-height: 38px;
}

.search-row {
    display: flex;
    align-items: center;
    gap: 25px;
    width: 3227px;
    height: 152px;
    padding-top: 2px;
}

.btn-primary {
    height: 76px;
    border-radius: 16px;
    background: #443fe0;
    font-weight: 500;
}

.btn-primary .icon { color: #fff; }
.add-folder { width: 264px; padding-left: 33px; gap: 16px; }
.create-script { width: 289px; padding-left: 33px; gap: 16px; }

.search {
    display: flex;
    align-items: center;
    flex: 1;
    height: 77px;
    padding-left: 22px;
    border: 2px solid #2a2a2f;
    border-radius: 16px;
    color: #5f5f63;
    font-size: 27.700px;
}

.search i {
    width: 2px;
    height: 42px;
    margin: 0 24px 0 16px;
    background: #29292e;
}

.folders {
    display: flex;
    gap: 21px;
    width: 3227px;
    height: 196px;
    padding-top: 33px;
    border-top: 2px solid #29292e;
    border-bottom: 2px solid #29292e;
}

.folder {
    display: flex;
    align-items: center;
    justify-content: space-between;
    width: 520px;
    height: 126px;
    padding: 0 41px 0 22px;
    border: 2px solid #343436;
    border-radius: 28px;
}

.gray { background: #2d2d2d; border-color: #333335; }
.purple { background: #372a36; border-color: #3c303c; }
.blue { background: #212e37; border-color: #28353e; }

.folder-name {
    display: flex;
    align-items: center;
    gap: 21px;
    margin-top: 2px;
    font-size: 28.500px;
    color: #8f8f92;
}

.gray .folder-name .icon { color: #b0b0b0; }
.purple .folder-name .icon { color: #9440f4; }
.blue .folder-name .icon { color: #5fabf9; }

.folder-count {
    display: flex;
    align-items: center;
    height: 52px;
    gap: 7px;
    padding-top: 4px;
    font-size: 26px;
}

.folder-count .icon { color: #cfcfd1; }

.list-head {
    display: flex;
    align-items: center;
    width: 3227px;
    height: 141px;
}

.list-head .v-line {
    margin: 0 24px 0 25px;
}

.checkbox {
    flex: none;
    width: 34px;
    height: 34px;
    border: 2px solid #3a3a3f;
    border-radius: 8px;
}

.list-head h2 {
    margin-left: 12px;
    font-size: 31.500px;
}

.select {
    position: relative;
    display: flex;
    align-items: center;
    height: 76px;
    border: 2px solid #2b2b30;
    border-radius: 18px;
    font-size: 27.500px;
}

.select .s42 { color: #fff; }
.select .s28 { margin-left: auto; }

.filters {
    width: 319px;
    margin-left: auto;
    padding: 0 10px 0 22px;
}

.filters .icon { margin-left: auto; }

.badge {
    width: 41px;
    height: 30px;
    margin-right: 8px;
    border: 2px solid #2b2b30;
    border-radius: 8px;
    text-align: center;
    font-size: 24px;
    line-height: 27px;
}

.sort {
    width: 462px;
    margin: 0 1px 0 34px;
    padding: 0 32px 0 22px;
}

.sort .s42 { margin-left: 15px; }

.legend {
    position: absolute;
    left: 18px;
    top: -18px;
    width: 103px;
    padding-left: 8px;
    background: #131317;
    color: #a4a4a8;
    font-size: 21px;
    line-height: 30px;
}

.cards {
    display: flex;
    gap: 26px;
}

.card {
    position: relative;
    width: 787px;
    height: 484px;
    padding: 34px 33px 32px;
    border: 2px solid #212125;
    border-radius: 34px;
}

.card.hovered {
    background: #1d1d20;
    border-color: #242428;
}

.card-title {
    display: flex;
    align-items: center;
    height: 76px;
}

.card-title b {
    margin: 0 9px 0 16px;
    font-weight: 400;
}

.icon-btn {
    display: flex;
    align-items: center;
    justify-content: center;
    width: 76px;
    height: 76px;
    border-radius: 18px;
}

.icon-btn.active {
    background: #252529;
}

.card-date {
    line-height: 76px;
}

.card-folder {
    display: flex;
    align-items: center;
    height: 41px;
    gap: 8px;
    color: #5f5f63;
    font-size: 25px;
    letter-spacing: 0.3px;
}

.card-folder .icon { color: #68686c; }

.card-tags {
    display: flex;
    align-items: center;
    height: 103px;
    margin-top: 18px;
    padding-left: 10px;
    border-top: 2px solid #2b2b30;
    border-bottom: 2px solid #2b2b30;
}

.card-foot {
    display: flex;
    align-items: center;
    height: 110px;
}

.card-id {
    width: 346px;
    letter-spacing: 0.35px;
}

.card-actions {
    display: flex;
    margin-left: auto;
}

/* Overlays of the hovered card */
.tooltip {
    position: absolute;
    left: 19px;
    top: -60px;
    width: 491px;
    height: 65px;
    padding-right: 3px;
    border-radius: 14px;
    background: #131317;
    box-shadow: 0 4px 30px rgba(60, 60, 66, 0.2);
    font-size: 25.700px;
    line-height: 65px;
    text-align: center;
    white-space: nowrap;
}

.mark-box {
    position: absolute;
    left: 218px;
    top: 21px;
    width: 99px;
    height: 101px;
    border: 4.500px solid #ea0b0e;
}

.mark-arrow {
    position: absolute;
    left: 335px;
    top: 68px;
    width: 442px;
    height: 26px;
    fill: #f00;
}

.pager {
    position: relative;
    display: flex;
    align-items: center;
    justify-content: flex-end;
    height: 177px;
    padding-right: 54px;
    font-size: 26px;
    color: #97979b;
}

.pager .icon {
    margin: 0 35px 0 35px;
    color: #434347;
}

.pager .icon:last-child {
    margin-right: 0;
}

.page-size {
    width: 176px;
    height: 76px;
    border: 2px solid #2a2a2f;
    border-radius: 16px;
    background: #131317;
    color: #fff;
    font-size: 28px;
    line-height: 74px;
    text-align: center;
}
```
